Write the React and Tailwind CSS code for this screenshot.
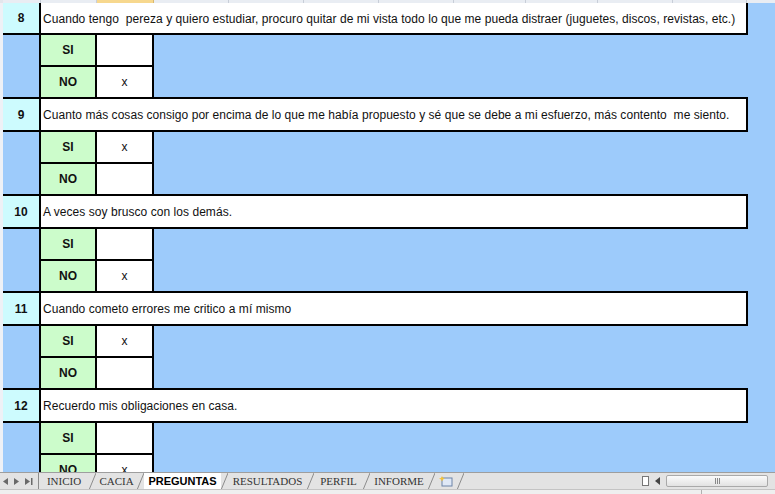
import React from 'react';

const questions = [
  { n: 8, text: 'Cuando tengo  pereza y quiero estudiar, procuro quitar de mi vista todo lo que me pueda distraer (juguetes, discos, revistas, etc.)', answer: 'NO' },
  { n: 9, text: 'Cuanto más cosas consigo por encima de lo que me había propuesto y sé que se debe a mi esfuerzo, más contento  me siento.', answer: 'SI' },
  { n: 10, text: 'A veces soy brusco con los demás.', answer: 'NO' },
  { n: 11, text: 'Cuando cometo errores me critico a mí mismo', answer: 'SI' },
  { n: 12, text: 'Recuerdo mis obligaciones en casa.', answer: 'NO' },
];

const tabs = [
  { name: 'INICIO', w: 'w-[50px]' },
  { name: 'CACIA', w: 'w-[41px]' },
  { name: 'PREGUNTAS', w: 'w-[77px]', active: true },
  { name: 'RESULTADOS', w: 'w-[79px]' },
  { name: 'PERFIL', w: 'w-[49px]' },
  { name: 'INFORME', w: 'w-[58px]' },
];

function Sep() {
  return (
    <svg width="7" height="17" viewBox="0 0 7 17" className="shrink-0">
      <line x1="0" y1="17" x2="7" y2="0" stroke="#8c8c8c" strokeWidth="1" />
    </svg>
  );
}

function AnswerRow({ label, marked, last }) {
  return (
    <div className={`flex ${last ? 'h-[30px]' : 'h-[32px]'}`}>
      <div className="w-[3px] bg-[#eef1f6]" />
      <div className="w-[38px] bg-[#9dcbfb] border-r-2 border-black" />
      <div
        className={`w-[56px] bg-[#ccfccb] border-r-2 border-black flex items-center justify-center font-bold ${last ? '' : 'border-b-2'}`}
      >
        {label}
      </div>
      <div
        className={`w-[57px] bg-white border-r-2 border-black flex items-center justify-center ${last ? '' : 'border-b-2'}`}
      >
        {marked ? 'x' : ''}
      </div>
      <div className="flex-1 bg-[#9dcbfb]" />
    </div>
  );
}

function Block({ q, first }) {
  return (
    <div className="flex flex-col shrink-0">
      <div className="flex">
        <div className="w-[3px] bg-[#eef1f6]" />
        <div className={`flex w-[745px] border-b-2 border-black ${first ? '' : 'border-t-2'}`}>
          <div
            className={`w-[38px] bg-[#cdfbfe] border-r-2 border-black flex items-center justify-center font-bold ${first ? 'h-[30px]' : 'h-[31px]'}`}
          >
            {q.n}
          </div>
          <div className="w-[707px] bg-white border-r-2 border-black flex items-center pl-[2px] pt-px whitespace-pre tracking-[0.05px]">
            {q.text}
          </div>
        </div>
        <div className="flex-1 bg-[#9dcbfb]" />
      </div>
      <AnswerRow label="SI" marked={q.answer === 'SI'} />
      <AnswerRow label="NO" marked={q.answer === 'NO'} last />
    </div>
  );
}

export default function App() {
  const cols = ['w-[75px]', 'w-[75px]', 'w-[75px]', 'w-[75px]', 'w-[72px]', 'w-[72px]', 'w-[75px]', 'w-[74px]'];
  return (
    <div className="w-[775px] h-[494px] overflow-hidden flex flex-col bg-[#9dcbfb] font-['Liberation_Sans',Arial,sans-serif] text-[12px] text-[#111]">
      {/* column header remnant */}
      <div className="h-[3px] flex shrink-0 bg-[#e9edf3]">
        <div className="w-[3px] bg-[#e2e6ec]" />
        <div className="w-[38px] border-r border-[#c8ced8]" />
        <div className="w-[56px] border-r border-[#c8ced8]" />
        <div className="w-[57px] bg-[#f7d88e] border-r border-[#d8b870]" />
        {cols.map((c, i) => (
          <div key={i} className={`${c} border-r border-[#c8ced8]`} />
        ))}
      </div>

      {/* sheet */}
      <div className="h-[469px] overflow-hidden flex flex-col shrink-0">
        {questions.map((q, i) => (
          <Block key={q.n} q={q} first={i === 0} />
        ))}
      </div>

      {/* sheet tabs */}
      <div className="h-[17px] flex shrink-0 bg-[#e3e3e3] border-t border-[#9e9e9e] text-[11px]">
        <div className="w-[38px] flex items-center gap-[6px] pl-[3px] text-[#5a5a5a]">
          <svg width="5" height="7" viewBox="0 0 5 7"><path d="M5 0 L0 3.5 L5 7 Z" fill="#6a6a6a" /></svg>
          <svg width="5" height="7" viewBox="0 0 5 7"><path d="M0 0 L5 3.5 L0 7 Z" fill="#6a6a6a" /></svg>
          <svg width="8" height="7" viewBox="0 0 8 7"><path d="M0 0 L5 3.5 L0 7 Z" fill="#6a6a6a" /><rect x="6" y="0" width="1.5" height="7" fill="#6a6a6a" /></svg>
        </div>
        <div className="w-px bg-[#8c8c8c]" />
        {tabs.map((t, i) => (
          <React.Fragment key={t.name}>
            {i > 0 && <Sep />}
            <div
              className={`${t.w} flex items-center justify-center ${
                t.active
                  ? "bg-white font-bold font-['Liberation_Sans',Arial,sans-serif] text-black"
                  : "font-['Liberation_Serif','Times_New_Roman',serif] text-[#333]"
              }`}
            >
              {t.name}
            </div>
          </React.Fragment>
        ))}
        <Sep />
        <div className="w-[22px] flex items-center justify-center">
          <svg width="14" height="12" viewBox="0 0 14 12">
            <rect x="3" y="3" width="10" height="8" fill="#dfe8f6" stroke="#6d84a8" strokeWidth="1" />
            <path d="M3 1 L4 3 L6 3.5 L4 4.5 L3 6.5 L2 4.5 L0 3.5 L2 3 Z" fill="#f3c23a" />
          </svg>
        </div>
        <Sep />
        <div className="flex-1" />
        <div className="w-[7px] my-[3px] mr-[6px] border border-[#777] bg-white" />
        <div className="flex items-center mr-[6px]">
          <svg width="5" height="8" viewBox="0 0 5 8"><path d="M5 0 L0 4 L5 8 Z" fill="#444" /></svg>
        </div>
        <div className="w-[102px] my-[2px] mr-[7px] rounded-[2px] border border-[#a9a9a9] bg-gradient-to-b from-[#fbfbfb] to-[#e2e2e2] flex items-center justify-center">
          <div className="flex gap-[1px]">
            <div className="w-px h-[6px] bg-[#888]" />
            <div className="w-px h-[6px] bg-[#888]" />
            <div className="w-px h-[6px] bg-[#888]" />
          </div>
        </div>
      </div>

      {/* bottom strip */}
      <div className="flex-1 flex bg-[#efefef] border-t border-[#c4c4c4]">
        <div className="w-[702px] border-r border-[#b0b0b0]" />
      </div>
    </div>
  );
}
